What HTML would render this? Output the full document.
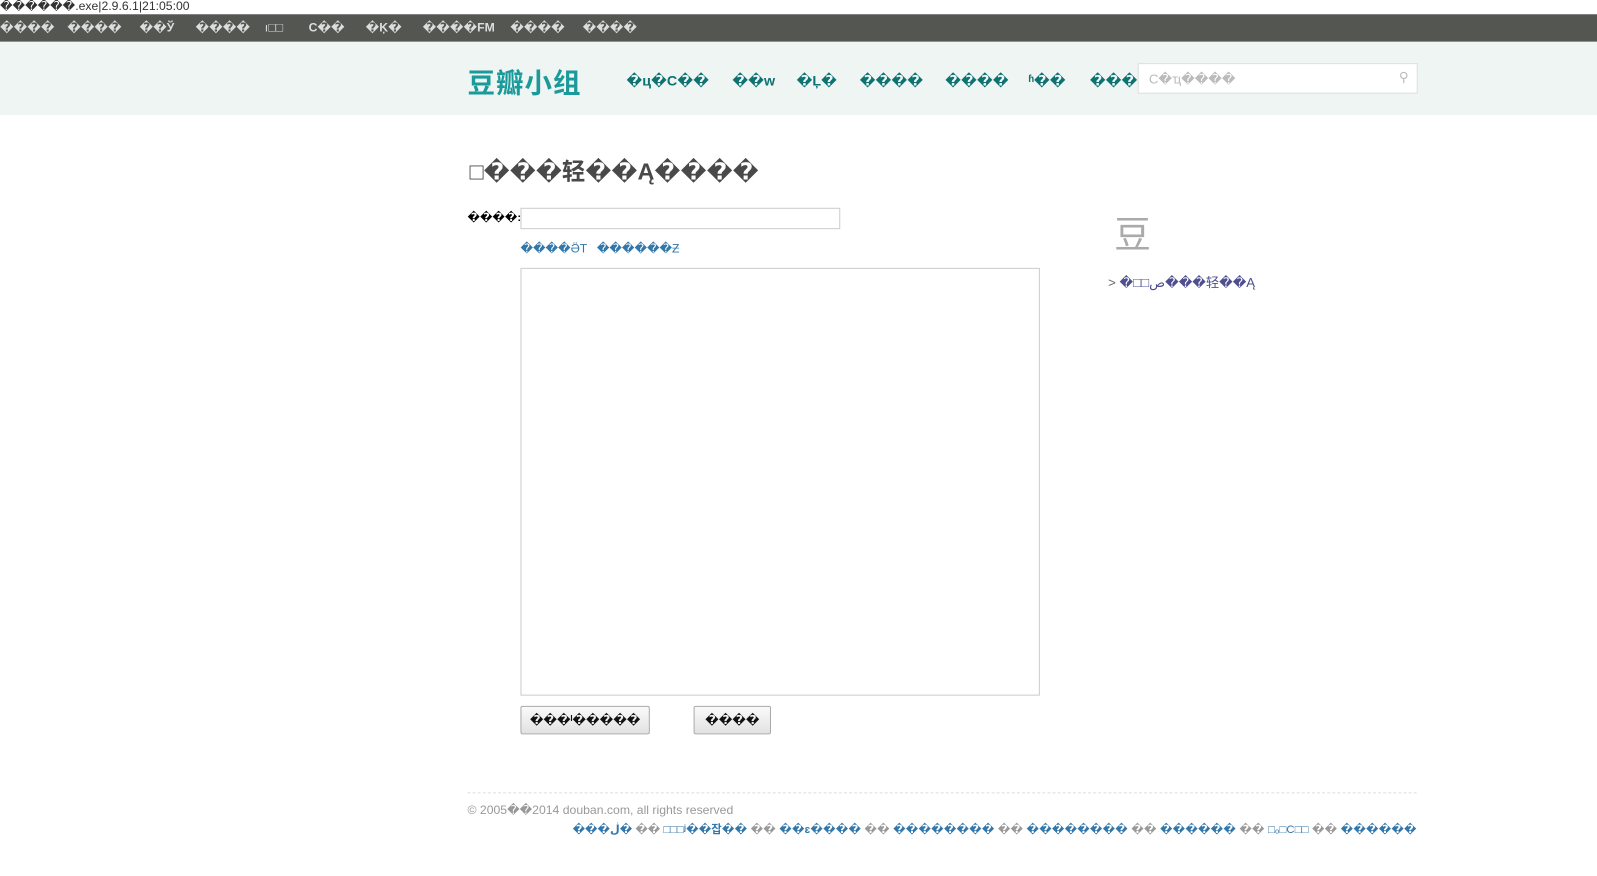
<!DOCTYPE html>
<html><head><meta charset="utf-8"><style>
body{margin:0;width:1597px;height:875px;background:#fff;font-family:"Liberation Sans","DejaVu Sans","Noto Sans CJK SC",sans-serif;position:relative;overflow:hidden}
#w{position:absolute;left:0;top:0;width:1568px;height:860px;transform:scale(1.0185);transform-origin:0 0}
.a{position:absolute;white-space:nowrap}
#top{left:0;top:0;font-size:12px;color:#333;line-height:12px}
#bar{left:0;top:14px;width:1568px;height:27px;background:#545652}
#bar span{position:absolute;top:6px;color:#ddd;font-size:12px;font-weight:bold}
#hd{left:0;top:41px;width:1568px;height:72px;background:#eff5f3}
.logo{left:459px;top:60px;font-size:27px;font-weight:bold;color:#1a9a9a;font-family:"Noto Sans CJK SC",sans-serif;letter-spacing:1px}
.nav{top:71px;font-size:14px;font-weight:bold;color:#0e7272}
.srch{left:1117px;top:62px;width:273px;height:28px;background:#fff;border:1px solid #ddd}
h1{position:absolute;left:461px;top:149px;margin:0;font-size:23px;color:#494949;font-weight:bold}
.lnk{color:#3377aa;font-size:12px}
.box{position:absolute;border:1px solid #ccc;background:#fff}
.btn{position:absolute;height:26px;border:1px solid #aaa;border-radius:2px;background:linear-gradient(#fafafa,#e2e2e2);font-size:12px;font-weight:bold;text-align:center;line-height:26px;color:#111}
</style></head><body><div id="w">
<div class="a" id="top">������.exe|2.9.6.1|21:05:00</div>
<div class="a" id="bar">
<span style="left:0">����</span><span style="left:66px">����</span><span style="left:137px">��Ў</span><span style="left:192px">����</span><span style="left:260px;font-weight:normal;font-size:12px">ı□□</span><span style="left:303px">C��</span><span style="left:359px">�Ķ�</span><span style="left:415px">����FM</span><span style="left:501px">����</span><span style="left:572px">����</span>
</div>
<div class="a" id="hd"></div>
<div class="a logo">豆瓣小组</div>
<div class="a nav" style="left:615px">�ц�C��</div>
<div class="a nav" style="left:719px">��w</div>
<div class="a nav" style="left:782px">�Ļ�</div>
<div class="a nav" style="left:844px">����</div>
<div class="a nav" style="left:928px">����</div>
<div class="a nav" style="left:1010px">ʱ��</div>
<div class="a nav" style="left:1070px">���</div>
<div class="a srch"><span style="position:absolute;left:10px;top:7px;font-size:13px;color:#bbb">C�ҵ����</span><span style="position:absolute;right:8px;top:5px;font-size:13px;color:#bbb">⚲</span></div>
<h1>□���轻��Ą����</h1>
<div class="a" style="left:459px;top:207px;font-size:11px;font-weight:bold">����:</div>
<div class="box" style="left:511px;top:204px;width:312px;height:19px"></div>
<div class="a lnk" style="left:511px;top:237px">����ӚТ</div>
<div class="a lnk" style="left:586px;top:237px">������Ƶ</div>
<div class="box" style="left:511px;top:263px;width:508px;height:418px"></div>
<div class="btn" style="left:511px;top:693px;width:125px">���ˡ�����</div>
<div class="btn" style="left:681px;top:693px;width:74px">����</div>
<div class="a" style="left:1094px;top:202px;font-size:36px;color:#aaa;font-family:'Noto Sans CJK SC',sans-serif">豆</div>
<div class="a" style="left:1088px;top:267px;font-size:13px;color:#666">&gt; <span style="color:#4f4f8f">�□□ص���轻��Ą</span></div>
<div class="a" style="left:459px;top:778px;width:932px;border-top:1px dashed #ddd"></div>
<div class="a" style="left:459px;top:788px;font-size:12px;color:#999">© 2005��2014 douban.com, all rights reserved</div>
<div class="a" style="right:177px;top:806px;font-size:11px;color:#3377aa;font-weight:bold;letter-spacing:0.2px">���ڶ� <span style="color:#999">��</span> □□□ʲ��잡�� <span style="color:#999">��</span> ��ɛ���� <span style="color:#999">��</span> �������� <span style="color:#999">��</span> �������� <span style="color:#999">��</span> ������ <span style="color:#999">��</span> <span style="font-weight:normal">□ₒ□C□□</span> <span style="color:#999">��</span> ������</div>
</div></body></html>
